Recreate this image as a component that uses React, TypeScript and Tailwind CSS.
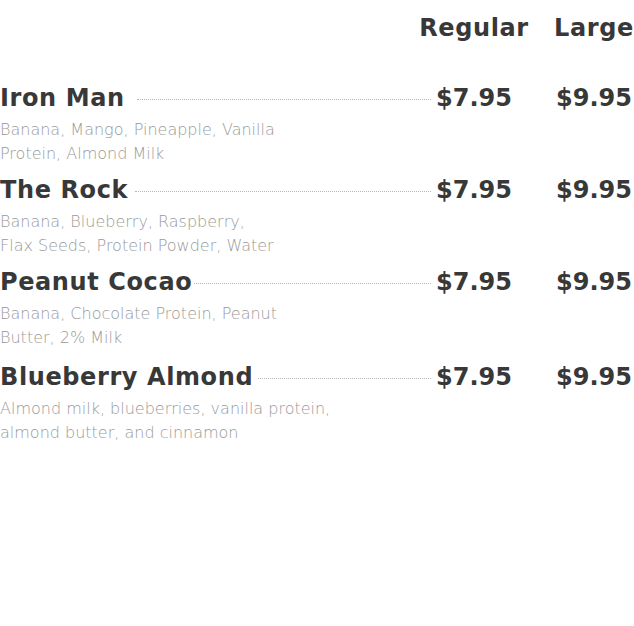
import React from "react";

type Item = { name: string; lines: string[]; dotsMl: string; last?: boolean };

const items: Item[] = [
  { name: "Iron Man", lines: ["Banana, Mango, Pineapple, Vanilla", "Protein, Almond Milk"], dotsMl: "ml-[12px]" },
  { name: "The Rock", lines: ["Banana, Blueberry, Raspberry,", "Flax Seeds, Protein Powder, Water"], dotsMl: "ml-[7px]" },
  { name: "Peanut Cocao", lines: ["Banana, Chocolate Protein, Peanut", "Butter, 2% Milk"], dotsMl: "ml-[2px]" },
  { name: "Blueberry Almond", lines: ["Almond milk, blueberries, vanilla protein,", "almond butter, and cinnamon"], dotsMl: "ml-[5px]", last: true },
];

export default function App() {
  return (
    <div className="w-[634px] h-[626px] bg-white overflow-hidden" style={{ fontFamily: '"DejaVu Sans", sans-serif' }}>
      <div className="flex justify-end pt-[12px]">
        <div className="w-[80px] flex justify-center whitespace-nowrap text-[24px] leading-[32px] tracking-[0.6px] font-bold text-[#383838]">Regular</div>
        <div className="w-[80px] ml-[40px] flex justify-center whitespace-nowrap text-[24px] leading-[32px] tracking-[0.6px] font-bold text-[#383838]">Large</div>
      </div>
      <div className="mt-[38px] flex flex-col">
        {items.map((it) => (
          <div key={it.name} className={it.last ? "mt-[3px]" : "mb-[8px]"}>
            <div className="flex items-start text-[24px] leading-[32px] font-bold text-[#383838]">
              <div className="whitespace-nowrap tracking-[0.6px]">{it.name}</div>
              <div className={`flex-1 h-[18px] border-b border-dotted border-[#b5b5b5] mr-[3px] ${it.dotsMl}`} />
              <div className="w-[80px] flex justify-center">$7.95</div>
              <div className="w-[80px] ml-[40px] flex justify-center">$9.95</div>
            </div>
            <div className="mt-[4px] text-[16px] leading-[24px] font-extralight text-[#9a9a9a]">
              {it.lines.map((l) => (
                <div key={l} className="whitespace-nowrap">{l}</div>
              ))}
            </div>
          </div>
        ))}
      </div>
    </div>
  );
}
